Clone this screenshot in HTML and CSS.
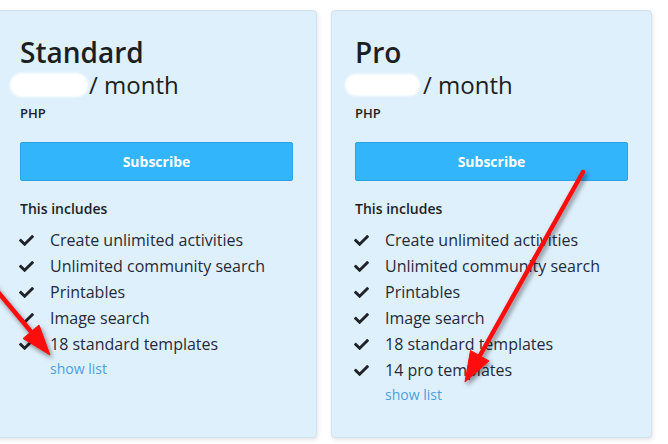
FILE: index.html
```html
<!DOCTYPE html>
<html lang="en">
<head>
<meta charset="utf-8">
<title>Plans</title>
<link rel="stylesheet" href="styles.css">
</head>
<body>
<div class="page">
  <div class="plans">
    <div class="card">
      <h2 class="title">Standard</h2>
      <div class="price"><span class="mask"></span>/ month</div>
      <div class="currency">PHP</div>
      <button class="subscribe">Subscribe</button>
      <div class="includes">This includes</div>
      <ul class="features">
        <li><svg class="check" viewBox="0 0 512 512"><path d="M173.898 439.404l-166.4-166.4c-9.997-9.997-9.997-26.206 0-36.204l36.203-36.204c9.997-9.998 26.207-9.998 36.204 0L192 312.69 432.095 72.596c9.997-9.997 26.207-9.997 36.204 0l36.203 36.204c9.997 9.997 9.997 26.206 0 36.204l-294.4 294.401c-9.998 9.997-26.207 9.997-36.204-.001z"/></svg>Create unlimited activities</li>
        <li><svg class="check" viewBox="0 0 512 512"><path d="M173.898 439.404l-166.4-166.4c-9.997-9.997-9.997-26.206 0-36.204l36.203-36.204c9.997-9.998 26.207-9.998 36.204 0L192 312.69 432.095 72.596c9.997-9.997 26.207-9.997 36.204 0l36.203 36.204c9.997 9.997 9.997 26.206 0 36.204l-294.4 294.401c-9.998 9.997-26.207 9.997-36.204-.001z"/></svg>Unlimited community search</li>
        <li><svg class="check" viewBox="0 0 512 512"><path d="M173.898 439.404l-166.4-166.4c-9.997-9.997-9.997-26.206 0-36.204l36.203-36.204c9.997-9.998 26.207-9.998 36.204 0L192 312.69 432.095 72.596c9.997-9.997 26.207-9.997 36.204 0l36.203 36.204c9.997 9.997 9.997 26.206 0 36.204l-294.4 294.401c-9.998 9.997-26.207 9.997-36.204-.001z"/></svg>Printables</li>
        <li><svg class="check" viewBox="0 0 512 512"><path d="M173.898 439.404l-166.4-166.4c-9.997-9.997-9.997-26.206 0-36.204l36.203-36.204c9.997-9.998 26.207-9.998 36.204 0L192 312.69 432.095 72.596c9.997-9.997 26.207-9.997 36.204 0l36.203 36.204c9.997 9.997 9.997 26.206 0 36.204l-294.4 294.401c-9.998 9.997-26.207 9.997-36.204-.001z"/></svg>Image search</li>
        <li><svg class="check" viewBox="0 0 512 512"><path d="M173.898 439.404l-166.4-166.4c-9.997-9.997-9.997-26.206 0-36.204l36.203-36.204c9.997-9.998 26.207-9.998 36.204 0L192 312.69 432.095 72.596c9.997-9.997 26.207-9.997 36.204 0l36.203 36.204c9.997 9.997 9.997 26.206 0 36.204l-294.4 294.401c-9.998 9.997-26.207 9.997-36.204-.001z"/></svg>18 standard templates</li>
      </ul>
      <a class="show-list" href="#">show list</a>
    </div>
    <div class="card">
      <h2 class="title">Pro</h2>
      <div class="price"><span class="mask mask-pro"></span>/ month</div>
      <div class="currency">PHP</div>
      <button class="subscribe">Subscribe</button>
      <div class="includes">This includes</div>
      <ul class="features">
        <li><svg class="check" viewBox="0 0 512 512"><path d="M173.898 439.404l-166.4-166.4c-9.997-9.997-9.997-26.206 0-36.204l36.203-36.204c9.997-9.998 26.207-9.998 36.204 0L192 312.69 432.095 72.596c9.997-9.997 26.207-9.997 36.204 0l36.203 36.204c9.997 9.997 9.997 26.206 0 36.204l-294.4 294.401c-9.998 9.997-26.207 9.997-36.204-.001z"/></svg>Create unlimited activities</li>
        <li><svg class="check" viewBox="0 0 512 512"><path d="M173.898 439.404l-166.4-166.4c-9.997-9.997-9.997-26.206 0-36.204l36.203-36.204c9.997-9.998 26.207-9.998 36.204 0L192 312.69 432.095 72.596c9.997-9.997 26.207-9.997 36.204 0l36.203 36.204c9.997 9.997 9.997 26.206 0 36.204l-294.4 294.401c-9.998 9.997-26.207 9.997-36.204-.001z"/></svg>Unlimited community search</li>
        <li><svg class="check" viewBox="0 0 512 512"><path d="M173.898 439.404l-166.4-166.4c-9.997-9.997-9.997-26.206 0-36.204l36.203-36.204c9.997-9.998 26.207-9.998 36.204 0L192 312.69 432.095 72.596c9.997-9.997 26.207-9.997 36.204 0l36.203 36.204c9.997 9.997 9.997 26.206 0 36.204l-294.4 294.401c-9.998 9.997-26.207 9.997-36.204-.001z"/></svg>Printables</li>
        <li><svg class="check" viewBox="0 0 512 512"><path d="M173.898 439.404l-166.4-166.4c-9.997-9.997-9.997-26.206 0-36.204l36.203-36.204c9.997-9.998 26.207-9.998 36.204 0L192 312.69 432.095 72.596c9.997-9.997 26.207-9.997 36.204 0l36.203 36.204c9.997 9.997 9.997 26.206 0 36.204l-294.4 294.401c-9.998 9.997-26.207 9.997-36.204-.001z"/></svg>Image search</li>
        <li><svg class="check" viewBox="0 0 512 512"><path d="M173.898 439.404l-166.4-166.4c-9.997-9.997-9.997-26.206 0-36.204l36.203-36.204c9.997-9.998 26.207-9.998 36.204 0L192 312.69 432.095 72.596c9.997-9.997 26.207-9.997 36.204 0l36.203 36.204c9.997 9.997 9.997 26.206 0 36.204l-294.4 294.401c-9.998 9.997-26.207 9.997-36.204-.001z"/></svg>18 standard templates</li>
        <li><svg class="check" viewBox="0 0 512 512"><path d="M173.898 439.404l-166.4-166.4c-9.997-9.997-9.997-26.206 0-36.204l36.203-36.204c9.997-9.998 26.207-9.998 36.204 0L192 312.69 432.095 72.596c9.997-9.997 26.207-9.997 36.204 0l36.203 36.204c9.997 9.997 9.997 26.206 0 36.204l-294.4 294.401c-9.998 9.997-26.207 9.997-36.204-.001z"/></svg>14 pro templates</li>
      </ul>
      <a class="show-list" href="#">show list</a>
    </div>
  </div>
  <svg class="arrows" viewBox="0 0 668 444" width="668" height="444">
    <defs>
      <filter id="sh" x="-20%" y="-20%" width="140%" height="140%">
        <feDropShadow dx="2" dy="3" stdDeviation="2.5" flood-color="#000" flood-opacity="0.45"/>
      </filter>
    </defs>
    <g filter="url(#sh)" fill="#ff0a0a" stroke="#ff0a0a">
      <line x1="-12" y1="280" x2="33" y2="334" stroke-width="4.5" stroke-linecap="round"/>
      <polygon points="50,355 39,325 23,338.5" stroke-width="1" stroke-linejoin="round"/>
      <line x1="583" y1="172" x2="478" y2="359" stroke-width="4.5" stroke-linecap="round"/>
      <polygon points="465,382 470.5,350.5 489,361" stroke-width="1" stroke-linejoin="round"/>
    </g>
  </svg>
</div>
</body>
</html>
```

FILE: styles.css
```css
* { box-sizing: border-box; }
html, body {
  margin: 0;
  padding: 0;
  background: #ffffff;
  overflow: hidden;
}
body {
  font-family: "Open Sans", "Noto Sans", sans-serif;
  color: #1f2833;
  width: 668px;
  height: 444px;
}
.page {
  position: relative;
  width: 668px;
  height: 444px;
}
.plans {
  display: flex;
  gap: 14px;
  padding-top: 10px;
  margin-left: -4px;
}
.card {
  width: 321px;
  height: 428px;
  flex: none;
  background: #dff0fd;
  border: 1px solid #d2e2ee;
  border-radius: 4px;
  box-shadow: 1px 2px 4px rgba(0, 0, 0, 0.10);
  padding: 24px 23px 0 23px;
  display: flex;
  flex-direction: column;
  align-items: flex-start;
}
.title {
  margin: 0;
  font-size: 28px;
  font-weight: 600;
  line-height: 35px;
  color: #1b1f24;
}
.price {
  font-size: 24px;
  font-weight: 400;
  line-height: 29px;
  color: #1b1f24;
  display: flex;
  align-items: center;
}
.mask {
  display: inline-block;
  width: 78px;
  height: 24px;
  margin-left: -10px;
  margin-right: 1px;
  background: #ffffff;
  border-radius: 12px;
  filter: blur(1px);
}
.mask-pro {
  width: 75px;
  height: 22px;
  margin-right: 3px;
}
.currency {
  margin-top: 4px;
  font-size: 13px;
  font-weight: 600;
  line-height: 20px;
  color: #1b1f24;
}
.subscribe {
  margin-top: 19px;
  width: 273px;
  height: 39px;
  background: #33b5fb;
  border: 1px solid #29a3e6;
  border-radius: 2px;
  color: #ffffff;
  font-family: "Open Sans", "Noto Sans", sans-serif;
  font-size: 14px;
  font-weight: 700;
  padding: 0;
}
.includes {
  margin-top: 18px;
  font-size: 14px;
  font-weight: 600;
  line-height: 20px;
  color: #1b1f24;
}
.features {
  list-style: none;
  margin: 8px 0 0 0;
  padding: 0;
}
.features li {
  display: flex;
  align-items: center;
  font-size: 16px;
  line-height: 26px;
  color: #1f2a3a;
}
.check {
  width: 15px;
  height: 15px;
  margin-left: -1px;
  margin-right: 16px;
  fill: #1f2226;
  flex: none;
}
.show-list {
  margin-top: 2px;
  margin-left: 30px;
  font-size: 14px;
  line-height: 20px;
  color: #4a9fe0;
  text-decoration: none;
}
.arrows {
  position: absolute;
  left: 0;
  top: 0;
  pointer-events: none;
  overflow: visible;
}
```
